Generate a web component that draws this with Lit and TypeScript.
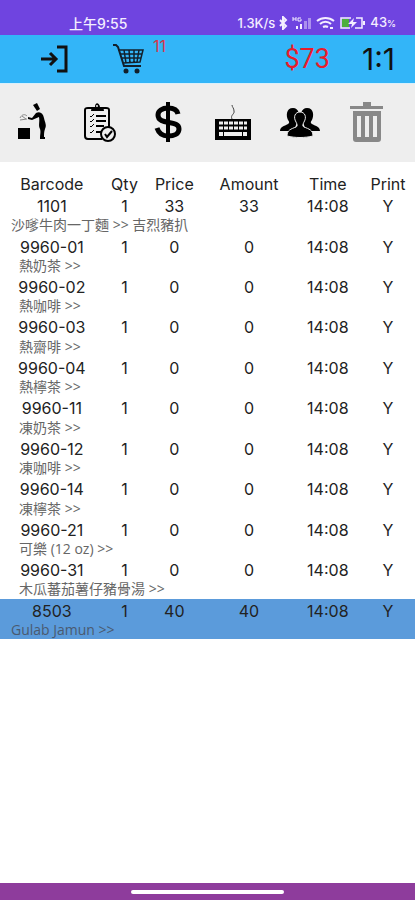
import { LitElement, html, css, svg } from "lit";
import { customElement } from "lit/decorators.js";
import { classMap } from "lit/directives/class-map.js";

interface Item {
  code: string;
  price: number;
  name: string;
  indent: boolean;
  selected?: boolean;
}

const items: Item[] = [
  { code: "1101", price: 33, name: "沙嗲牛肉一丁麵 >> 吉烈豬扒", indent: false },
  { code: "9960-01", price: 0, name: "熱奶茶 >>", indent: true },
  { code: "9960-02", price: 0, name: "熱咖啡 >>", indent: true },
  { code: "9960-03", price: 0, name: "熱齋啡 >>", indent: true },
  { code: "9960-04", price: 0, name: "熱檸茶 >>", indent: true },
  { code: "9960-11", price: 0, name: "凍奶茶 >>", indent: true },
  { code: "9960-12", price: 0, name: "凍咖啡 >>", indent: true },
  { code: "9960-14", price: 0, name: "凍檸茶 >>", indent: true },
  { code: "9960-21", price: 0, name: "可樂 (12 oz) >>", indent: true },
  { code: "9960-31", price: 0, name: "木瓜蕃茄薯仔豬骨湯 >>", indent: true },
  { code: "8503", price: 40, name: "Gulab Jamun >>", indent: false, selected: true },
];

const columns = ["Barcode", "Qty", "Price", "Amount", "Time", "Print"];

const tools = [
  {
    label: "Serve",
    icon: svg`
      <path d="M5 26h12v11H5z"/>
      <path d="M20 3l4-2 3 6-3 2z"/>
      <path d="M23 11c4-2 7 0 8 5s3 7 1 11c-1 3-1 5-1 8h1v2h-5c0-5 1-7 0-10-2-4 0-7-1-12l-7 3-4-1v-2l4 1z"/>
      <path d="M7 16c2-4 5-4 7-2M7 18l7-1M9 14l4 3" fill="none" stroke="#888"/>`,
  },
  {
    label: "Orders",
    icon: svg`
      <path d="M29 26V8c0-2-1-2-3-2H8C6 6 5 6 5 8v26c0 2 1 3 3 3h14" fill="none" stroke="#000" stroke-width="2"/>
      <path d="M11 9c0-3 2-4 4-4 0-5 4-5 5 0 2 0 4 1 4 4z"/>
      <circle cx="17" cy="4" r="1" fill="#eee"/>
      <path d="M16 14h10M16 19h10M16 24h8M16 30h5" stroke="#000" stroke-width="2"/>
      <path d="M10 14l1 1 3-3M10 19l1 1 3-3M10 24l1 1 3-3M10 30l1 1 3-3" fill="none" stroke="#000"/>
      <circle cx="28" cy="32" r="7" fill="#eee" stroke="#000" stroke-width="2"/>
      <path d="M25 32l2 3 5-6" fill="none" stroke="#000" stroke-width="2"/>`,
  },
  {
    label: "Payment",
    icon: svg`
      <path d="M31 12C30 7 26 6 21 6c-6 0-10 3-10 7 0 11 21 4 21 14 0 5-5 7-11 7-5 0-9-2-11-8" fill="none" stroke="#000" stroke-width="5"/>
      <path d="M19 0h4v40h-4z"/>`,
  },
  {
    label: "Keyboard",
    icon: svg`
      <path d="M19 17c-2-4 3-5 2-8 0-3-2-4-2-6" fill="none" stroke="#444"/>
      <path d="M2 17h36v21H2z"/>
      <path d="M6 21h28M6 26h28" stroke="#eee" stroke-width="3" stroke-dasharray="4 1"/>
      <path d="M6 32h4M11 32h18M30 32h4" stroke="#eee" stroke-width="4"/>`,
  },
  {
    label: "Customers",
    icon: svg`
      <path d="M0 29c0-4 4-5 8-7 2-1 1-3 0-4-2-4-2-12 5-12 6 0 7 7 5 11l-4 12z"/>
      <path d="M40 29c0-4-4-5-8-7-2-1-1-3 0-4 2-4 2-12-5-12-6 0-7 7-5 11l4 12z"/>
      <path d="M7 34c0-6 4-7 9-9 2-1 1-3 0-5-3-5-1-10 4-10s7 5 4 10c-1 2-2 4 0 5 5 2 9 3 9 9-8 2-18 2-26 0z" stroke="#eee"/>`,
  },
  {
    label: "Delete",
    icon: svg`
      <g fill="#888">
        <path d="M3 7V4h13V0h8v4h12v3z"/>
        <path fill-rule="evenodd" d="M6 9h28v28c0 2-1 3-3 3H9c-2 0-3-1-3-3zM10 14v21h4V14zM18 14v21h4V14zM26 14v21h4V14z"/>
      </g>`,
  },
];

@customElement("app-root")
export class AppRoot extends LitElement {
  static styles = css`
    :host {
      display: flex;
      flex-direction: column;
      min-height: 100vh;
      background: #fff;
      color: #222;
      font-family: Inter, "Noto Sans CJK TC", sans-serif;
    }
    button {
      display: flex;
      align-items: center;
      justify-content: center;
      padding: 0;
      border: 0;
      background: none;
      color: inherit;
      font: inherit;
    }
    .status {
      display: flex;
      align-items: flex-end;
      justify-content: space-between;
      height: 35px;
      padding: 0 19px 0 69px;
      box-sizing: border-box;
      background: #6f44e0;
      color: #f4eeff;
      font-size: 13px;
      line-height: 22px;
      font-weight: 500;
    }
    .clock {
      font-size: 14px;
    }
    .signals {
      display: flex;
      align-items: center;
      gap: 4px;
    }
    .signals small {
      font-size: 9px;
    }
    .signals svg {
      display: block;
    }
    .appbar {
      display: flex;
      align-items: center;
      height: 48px;
      padding: 0 20px 0 40px;
      background: #33b5f8;
      color: #111;
      border-bottom: 1px solid #d8f0fc;
    }
    .cart {
      margin-left: 44px;
    }
    .count {
      align-self: flex-start;
      margin-left: 9px;
      color: #d8354a;
      font-size: 16px;
      line-height: 22px;
    }
    .total {
      margin-left: auto;
      color: #e81c2c;
      font-family: Roboto, sans-serif;
      font-size: 27px;
    }
    .ratio {
      margin-left: 32px;
      font-size: 30px;
    }
    .tools {
      display: grid;
      grid-template-columns: repeat(6, 1fr);
      height: 78px;
      padding: 0 15px 2px 0;
      box-sizing: border-box;
      background: #eee;
    }
    .list {
      flex: 1;
      padding-top: 12px;
    }
    table {
      width: 100%;
      height: 465px;
      table-layout: fixed;
      border-collapse: collapse;
    }
    th,
    td {
      padding: 0;
      font-size: 16px;
      line-height: 20px;
      font-weight: 400;
      text-align: center;
      white-space: nowrap;
    }
    td {
      padding-top: 2px;
    }
    .w25 { width: 25%; }
    .w10 { width: 10%; }
    .w14 { width: 14%; }
    .w22 { width: 22%; }
    .w16 { width: 16%; }
    .w13 { width: 13%; }
    .name {
      padding: 0 0 0 11px;
      color: #666;
      font-family: "Open Sans", "Noto Sans CJK TC", sans-serif;
      font-size: 14px;
      line-height: 18px;
      text-align: left;
    }
    .indent {
      padding-left: 19px;
    }
    .selected {
      background: #5b9bdb;
    }
    .selected .name {
      color: #4a5a70;
    }
    .nav {
      display: flex;
      align-items: center;
      justify-content: center;
      height: 17px;
      background: #8e3c9c;
    }
    .pill {
      width: 37%;
      height: 4px;
      border-radius: 2px;
      background: #fff;
    }
  `;

  render() {
    return html`
      <div class="status">
        <span class="clock">上午9:55</span>
        <div class="signals">
          <span>1.3K/s</span>
          <svg width="9" height="14" viewBox="0 0 9 14" fill="none" stroke="#f4eeff" stroke-width="2">
            <path d="M1 4l6 6-3 3V1l3 3-6 6" />
          </svg>
          <svg width="20" height="14" viewBox="0 0 20 14" fill="#f4eeff">
            <path d="M1 1v4M4 1v4M1 3h3M9 2H6v3h3V3" fill="none" stroke="#f4eeff" />
            <path d="M4 10h2v3H4zM8 8h2v5H8z" />
            <path d="M12 5h3v8h-3zM16 2h3v11h-3z" opacity=".45" />
          </svg>
          <svg width="19" height="14" viewBox="0 0 19 14" fill="none" stroke="#f4eeff" stroke-width="2">
            <path d="M1 5c5-4 12-4 17 0M4 8c3-3 8-3 11 0M7 11c2-1 3-1 5 0" />
            <path d="M14 12h3" />
          </svg>
          <svg width="27" height="12" viewBox="0 0 27 12">
            <path d="M12 1H2v10h9M17 1h6v10h-7" fill="none" stroke="#f4eeff" stroke-width="1.500" />
            <path d="M3 2h7v8H3z" fill="#4caf3c" />
            <path d="M15 1l-6 6h4l-1 4 6-6h-4zM24 4h2v4h-2z" fill="#f4eeff" />
          </svg>
          <span>43<small>%</small></span>
        </div>
      </div>
      <header class="appbar">
        <button aria-label="Sign in">
          <svg width="28" height="28" viewBox="0 0 28 28" fill="none" stroke="#111" stroke-width="3">
            <path d="M17 2h9v24h-9M1 14h15M10 8l6 6-6 6" />
          </svg>
        </button>
        <button class="cart" aria-label="Cart">
          <svg width="32" height="32" viewBox="0 0 32 32" fill="none" stroke="#12202c" stroke-width="1.500">
            <path d="M1 2h3l2 2 6 19h17" stroke-width="2" />
            <path d="M6 7h25l-3 12-17 1M8 11h22M10 15h19M12 7l2 13M17 7l1 13M22 7v12M27 7l-2 12" />
            <circle cx="14" cy="28" r="2.500" fill="#12202c" stroke="none" />
            <circle cx="25" cy="28" r="2.500" fill="#12202c" stroke="none" />
          </svg>
        </button>
        <span class="count">11</span>
        <span class="total">$73</span>
        <span class="ratio">1:1</span>
      </header>
      <nav class="tools">
        ${tools.map(
          (t) => html`<button aria-label=${t.label}>
            <svg width="40" height="40" viewBox="0 0 40 40">${t.icon}</svg>
          </button>`
        )}
      </nav>
      <main class="list">
        <table>
          <colgroup>
            <col class="w25" /><col class="w10" /><col class="w14" />
            <col class="w22" /><col class="w16" /><col class="w13" />
          </colgroup>
          <thead>
            <tr>${columns.map((c) => html`<th scope="col">${c}</th>`)}</tr>
          </thead>
          ${items.map(
            (i) => html`<tbody class=${classMap({ selected: !!i.selected })}>
              <tr>
                <td>${i.code}</td>
                <td>1</td>
                <td>${i.price}</td>
                <td>${i.price}</td>
                <td>14:08</td>
                <td>Y</td>
              </tr>
              <tr>
                <td colspan="6" class=${classMap({ name: true, indent: i.indent })}>${i.name}</td>
              </tr>
            </tbody>`
          )}
        </table>
      </main>
      <footer class="nav"><div class="pill"></div></footer>
    `;
  }
}
